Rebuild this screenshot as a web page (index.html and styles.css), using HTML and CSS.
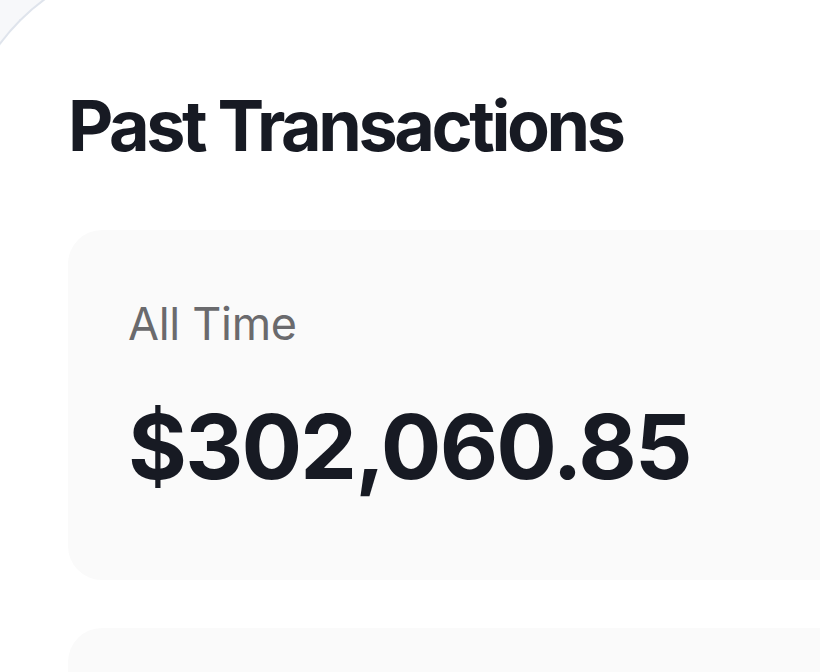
FILE: index.html
```html
<!DOCTYPE html>
<html lang="en">
  <head>
    <meta charset="UTF-8" />
    <title>Past Transactions</title>
    <meta name="viewport" content="width=device-width, initial-scale=1.0" />
    <link rel="stylesheet" href="styles.css">
  </head>
  <body>
    <div class="sheet">
      <h1 class="title">Past Transactions</h1>

      <div class="stat-card">
        <div class="stat-label">All Time</div>
        <div class="stat-value">$302,060.85</div>
      </div>

      <div class="stat-card stat-card--next"></div>
    </div>
  </body>
</html>
```

FILE: styles.css
```css
  body {
    font-family: "Inter", "Liberation Sans", sans-serif;
    background: #f7f8fa;
    margin: 0;
    padding: 0;
    color: #171a23;
    overflow: hidden;
    height: 672px;
  }

  .sheet {
    background: #ffffff;
    border: 2px solid #dfe4ec;
    border-right: none;
    border-bottom: none;
    border-radius: 210px 0 0 0;
    margin: -42px -200px 0 -42px;
    padding: 42px 0 0 108px;
    height: 900px;
  }

  .title {
    font-size: 70px;
    font-weight: 700;
    letter-spacing: -3.4px;
    margin: 0;
    padding-top: 80px;
    line-height: 88px;
  }

  .stat-card {
    background: #fafafa;
    border-radius: 34px;
    margin-top: 60px;
    padding: 66px 60px 80px;
    height: 204px;
  }

  .stat-label {
    font-size: 45px;
    color: #6a6a6d;
    line-height: 56px;
    letter-spacing: -0.3px;
  }

  .stat-value {
    font-size: 90px;
    font-weight: 700;
    letter-spacing: -1.8px;
    line-height: 110px;
    margin-top: 40px;
  }

  .stat-card--next {
    margin-top: 48px;
  }
```
